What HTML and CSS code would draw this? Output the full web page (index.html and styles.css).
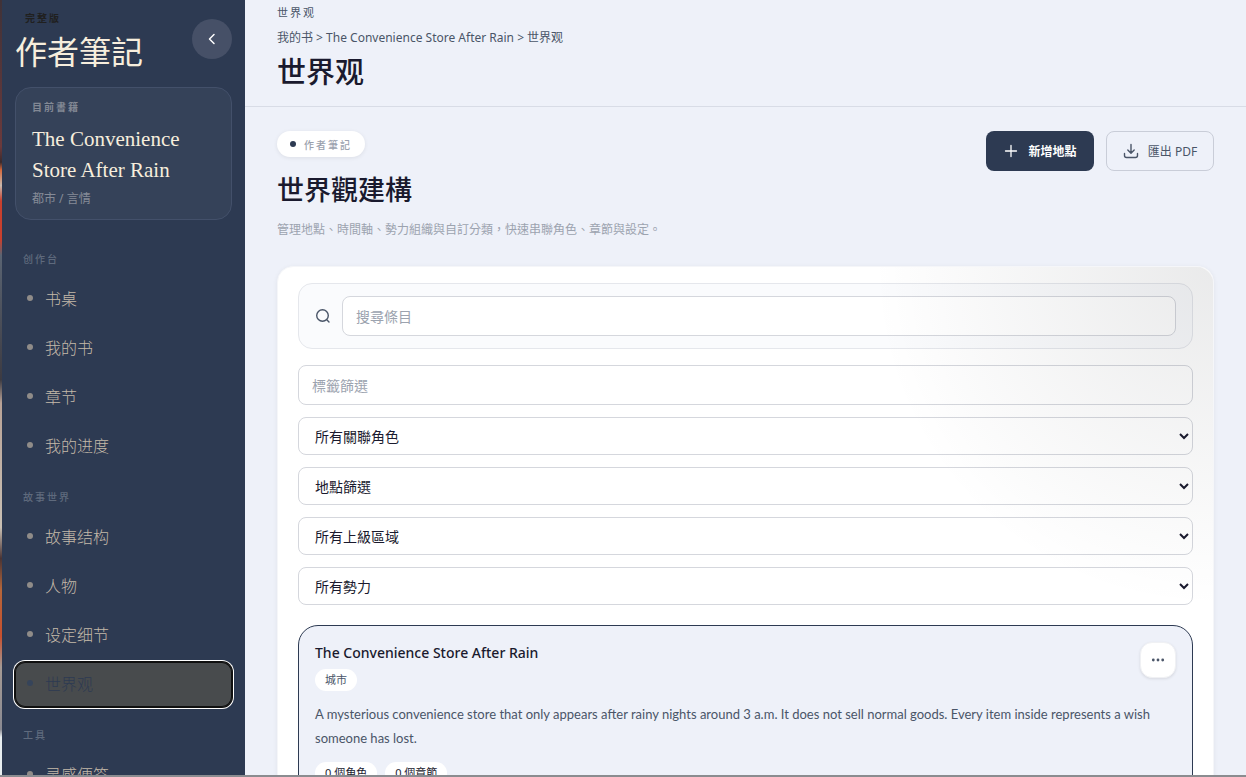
FILE: index.html
```html
<!DOCTYPE html>
<html lang="zh-Hant">
<head>
    <meta charset="UTF-8">
    <meta name="viewport" content="width=device-width, initial-scale=1.0">
    <title>世界观 - 作者筆記</title>
    <link rel="stylesheet" href="styles.css">
</head>
<body>

    <div class="app">
        <!-- Sidebar -->
        <aside class="sidebar">
            <div class="brand">
                <div>
                    <p class="edition">完整版</p>
                    <p class="brand-name">作者筆記</p>
                </div>
                <button class="collapse-btn" aria-label="收合">
                    <svg width="16" height="16" viewBox="0 0 16 16" fill="none" stroke="currentColor" stroke-width="1.5" stroke-linecap="round" stroke-linejoin="round"><path d="M10 3.5L5.500 8l4.500 4.500"/></svg>
                </button>
            </div>

            <div class="book-card">
                <p class="book-label">目前書籍</p>
                <p class="book-title">The Convenience Store After Rain</p>
                <p class="book-genre">都市 / 言情</p>
            </div>

            <nav lang="zh-Hans">
                <div class="nav-group">
                    <h3>创作台</h3>
                    <a href="#desk">书桌</a>
                    <a href="#books">我的书</a>
                    <a href="#chapters">章节</a>
                    <a href="#progress">我的进度</a>
                </div>
                <div class="nav-group">
                    <h3>故事世界</h3>
                    <a href="#structure">故事结构</a>
                    <a href="#characters">人物</a>
                    <a href="#details">设定细节</a>
                    <a href="#world" class="active">世界观</a>
                </div>
                <div class="nav-group">
                    <h3>工具</h3>
                    <a href="#notes">灵感便签</a>
                </div>
            </nav>
        </aside>

        <!-- Main content -->
        <main class="main">
            <header class="page-header" lang="zh-Hans">
                <p class="section-name">世界观</p>
                <p class="breadcrumb">我的书 &gt; The Convenience Store After Rain &gt; 世界观</p>
                <h1>世界观</h1>
            </header>

            <div class="content">
                <div class="intro">
                    <div>
                        <span class="pill">作者筆記</span>
                        <h2>世界觀建構</h2>
                        <p class="subtitle">管理地點、時間軸、勢力組織與自訂分類，快速串聯角色、章節與設定。</p>
                    </div>
                    <div class="actions">
                        <button class="btn btn-primary">
                            <svg width="16" height="16" viewBox="0 0 16 16" fill="none" stroke="currentColor" stroke-width="1.3" stroke-linecap="round"><path d="M8 2.500v11M2.500 8h11"/></svg>
                            新增地點
                        </button>
                        <button class="btn btn-outline">
                            <svg width="16" height="16" viewBox="0 0 16 16" fill="none" stroke="currentColor" stroke-width="1.4" stroke-linecap="round" stroke-linejoin="round"><path d="M8 1.500v8.500M4.800 7L8 10.200 11.200 7M1.500 10.500v2a2 2 0 0 0 2 2h9a2 2 0 0 0 2-2v-2"/></svg>
                            匯出 PDF
                        </button>
                    </div>
                </div>

                <section class="panel">
                    <div class="search-box">
                        <svg width="16" height="16" viewBox="0 0 16 16" fill="none" stroke="currentColor" stroke-width="1.4" stroke-linecap="round"><circle cx="7.500" cy="7.500" r="5.800"/><path d="M11.800 11.800l2.200 2.200"/></svg>
                        <input type="text" placeholder="搜尋條目" aria-label="搜尋條目">
                    </div>

                    <div class="filters">
                        <input type="text" placeholder="標籤篩選" aria-label="標籤篩選">
                        <select aria-label="關聯角色">
                            <option>所有關聯角色</option>
                        </select>
                        <select aria-label="地點">
                            <option>地點篩選</option>
                        </select>
                        <select aria-label="上級區域">
                            <option>所有上級區域</option>
                        </select>
                        <select aria-label="勢力">
                            <option>所有勢力</option>
                        </select>
                    </div>

                    <article class="entry">
                        <div class="entry-head">
                            <div>
                                <h3>The Convenience Store After Rain</h3>
                                <span class="tag">城市</span>
                            </div>
                            <button class="more-btn" aria-label="更多">
                                <svg width="16" height="16" viewBox="0 0 16 16" fill="currentColor"><circle cx="3.300" cy="8" r="1.400"/><circle cx="8" cy="8" r="1.400"/><circle cx="12.700" cy="8" r="1.400"/></svg>
                            </button>
                        </div>
                        <p class="entry-text">A mysterious convenience store that only appears after rainy nights around 3 a.m. It does not sell normal goods. Every item inside represents a wish someone has lost.</p>
                        <div class="counts">
                            <span class="tag">0 個角色</span>
                            <span class="tag">0 個章節</span>
                        </div>
                    </article>
                </section>
            </div>
        </main>
    </div>

</body>
</html>
```
FILE: styles.css
```css
* {
    margin: 0;
    padding: 0;
    box-sizing: border-box;
}
body {
    height: 100vh;
    overflow: hidden;
    font-family: "Noto Sans", "Noto Sans CJK TC", sans-serif;
    font-size: 14px;
    color: #1a1a2e;
    background: #eef1f9;
    border-bottom: 2px solid #8a8c90;
}
:lang(zh-Hans) {
    font-family: "Noto Sans", "Noto Sans CJK SC", sans-serif;
}
button, input, select {
    font-family: inherit;
}
.app {
    display: flex;
    height: 100%;
    overflow: hidden;
}

/* Sidebar */
.sidebar {
    width: 245px;
    flex-shrink: 0;
    padding: 10px 13px 0;
    background: #2d3a52;
    border-left: 2px solid;
    border-image: linear-gradient(#3f3238 0%, #6b3a3c 19%, #3a2a2c 21%, #d4683c 22%, #c9b8ac 24%, #c8402e 26%, #c8402e 31%, #5a6472 33%, #3d3b42 49%, #b9a397 52%, #c9c0b4 68%, #4a3434 72%, #b5663a 76%, #c8502e 82%, #a59a94 86%, #8a8a92 94%, #e8eef0 95%, #e8eef0 100%) 1;
}
.brand {
    display: flex;
    justify-content: space-between;
    align-items: center;
    height: 68px;
    margin-bottom: 9px;
}
.edition {
    padding-left: 10px;
    font-size: 10px;
    line-height: 16px;
    letter-spacing: 2px;
    font-weight: bold;
    color: #20201f;
}
.brand-name {
    font-size: 32px;
    line-height: 52px;
    color: #f7eedd;
}
.collapse-btn {
    width: 40px;
    height: 40px;
    margin-bottom: 10px;
    display: flex;
    align-items: center;
    justify-content: center;
    border: none;
    border-radius: 50%;
    background: #465067;
    color: #fff;
}
.book-card {
    padding: 12px 16px;
    border: 1px solid #43506a;
    border-radius: 16px;
    background: #354259;
}
.book-label {
    font-size: 10px;
    line-height: 15px;
    letter-spacing: 2px;
    font-weight: bold;
    color: #828894;
}
.book-title {
    margin: 9px 0 4px;
    font-family: "Liberation Serif", serif;
    font-size: 21px;
    line-height: 31px;
    color: #f7eedd;
}
.book-genre {
    font-size: 12px;
    line-height: 17px;
    color: #858b97;
}
nav {
    padding-top: 32px;
}
.nav-group {
    display: flex;
    flex-direction: column;
    gap: 4px;
    margin-bottom: 21px;
}
.nav-group h3 {
    margin-bottom: 6px;
    padding-left: 8px;
    font-size: 10px;
    line-height: 15px;
    letter-spacing: 2px;
    font-weight: 500;
    color: #5f6a7d;
}
.nav-group a {
    display: flex;
    align-items: center;
    gap: 12px;
    height: 45px;
    padding: 0 0 4px 12px;
    border-radius: 10px;
    font-size: 16px;
    font-weight: 300;
    color: #c4b9a9;
    text-decoration: none;
}
.nav-group a::before {
    content: "";
    width: 6px;
    height: 6px;
    border-radius: 50%;
    background: #908c89;
}
.nav-group a.active {
    background: #484b4d;
    color: #2d3a52;
    box-shadow: inset 0 0 0 1px #101010, 0 0 0 1px #101010, 0 0 0 2px #fff;
}
.nav-group a.active::before {
    background: #36445a;
}

/* Main */
.main {
    flex: 1;
    min-width: 0;
}
.page-header {
    padding: 5px 32px 14px;
    border-bottom: 1px solid #d8dce6;
    color: #4a5568;
}
.section-name {
    font-size: 11px;
    line-height: 16px;
    letter-spacing: 2px;
}
.breadcrumb {
    margin: 7px 0 4px;
    font-size: 12px;
    line-height: 20px;
}
.page-header h1 {
    font-size: 29px;
    line-height: 40px;
    font-weight: 500;
    color: #1a1a2e;
}
.content {
    padding: 24px 32px;
}
.intro {
    display: flex;
    justify-content: space-between;
    align-items: flex-start;
    margin-bottom: 26px;
}
.pill {
    display: inline-flex;
    align-items: center;
    gap: 8px;
    height: 26px;
    padding: 0 13px;
    border-radius: 13px;
    background: #fff;
    box-shadow: 0 1px 4px rgba(0, 0, 0, 0.08);
    font-size: 10px;
    letter-spacing: 2px;
    font-weight: 500;
    color: #9aa1ad;
}
.pill::before {
    content: "";
    width: 6px;
    height: 6px;
    border-radius: 50%;
    background: #2d3a52;
}
.intro h2 {
    margin: 13px 0 10px;
    font-size: 27px;
    line-height: 40px;
    font-weight: 500;
}
.subtitle {
    font-size: 12px;
    line-height: 20px;
    color: #9ca3af;
}
.actions {
    display: flex;
    gap: 12px;
}
.btn {
    display: flex;
    align-items: center;
    justify-content: center;
    gap: 9px;
    width: 108px;
    height: 40px;
    border-radius: 8px;
    font-size: 12px;
}
.btn-primary {
    border: none;
    background: #2d3a52;
    color: #fff;
    font-weight: bold;
}
.btn-outline {
    border: 1px solid #c9cdd8;
    background: none;
    color: #4a5568;
}
.panel {
    position: relative;
    padding: 16px 20px 24px;
    border: 1px solid #f5f6f9;
    border-radius: 16px;
    background: #fff;
    box-shadow: 0 1px 5px rgba(0, 0, 0, 0.06);
}
.panel::after {
    content: "";
    position: absolute;
    inset: 0;
    border-radius: 16px;
    background: radial-gradient(circle at top right, rgba(20, 24, 30, 0.09), transparent 340px);
    pointer-events: none;
}
.search-box {
    display: flex;
    align-items: center;
    gap: 11px;
    height: 66px;
    margin-bottom: 16px;
    padding: 0 16px;
    border: 1px solid #e5e7ec;
    border-radius: 14px;
    background: #fafbfd;
    color: #4a5568;
}
.search-box input {
    flex: 1;
}
.panel input, .panel select {
    height: 40px;
    padding: 0 13px;
    border: 1px solid #d5d7dd;
    border-radius: 8px;
    background: #fff;
    font-size: 14px;
    color: #1a1a2e;
}
.panel select {
    height: 38px;
    padding: 0 0 0 12px;
}
.panel input::placeholder {
    color: #9ca3af;
}
.filters {
    display: flex;
    flex-direction: column;
    gap: 12px;
    margin-bottom: 20px;
}
.entry {
    padding: 16px;
    border: 1px solid #2d3a52;
    border-radius: 20px;
    background: #eef1f9;
}
.entry-head {
    display: flex;
    justify-content: space-between;
    align-items: flex-start;
}
.entry h3 {
    margin-bottom: 5px;
    font-size: 14px;
    line-height: 22px;
    font-weight: 500;
}
.tag {
    display: inline-block;
    padding: 0 10px;
    border-radius: 11px;
    background: #fff;
    font-size: 11px;
    line-height: 22px;
    color: #4a5568;
}
.more-btn {
    display: flex;
    align-items: center;
    justify-content: center;
    width: 36px;
    height: 36px;
    border: 1px solid #f0f1f4;
    border-radius: 12px;
    background: #fff;
    box-shadow: 0 1px 3px rgba(0, 0, 0, 0.1);
    color: #4a5568;
}
.entry-text {
    margin: 11px 0 12px;
    font-family: Lato, "Noto Sans CJK TC", sans-serif;
    font-size: 13px;
    line-height: 24px;
    color: #4a5568;
}
.counts {
    display: flex;
    gap: 8px;
}
.counts .tag {
    color: #1a1a2e;
}
```
